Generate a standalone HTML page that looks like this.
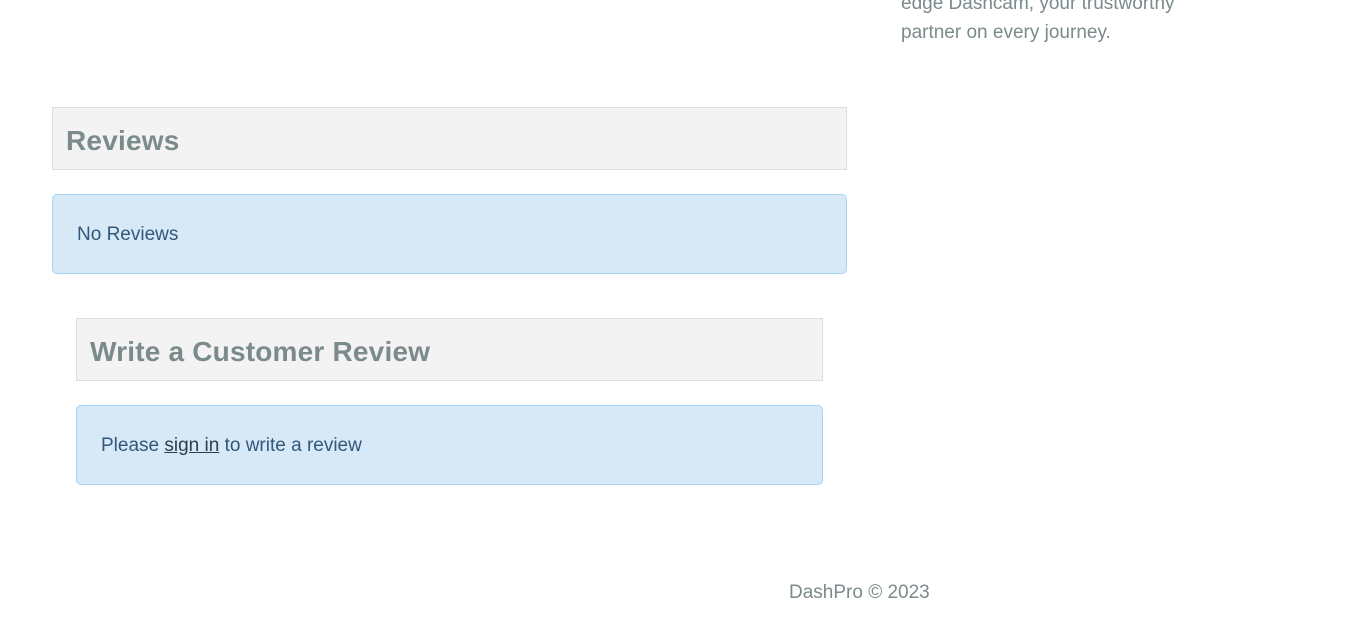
<!DOCTYPE html>
<html><head><style>
body{margin:0;background:#fff;font-family:"Liberation Sans",sans-serif;width:1362px;height:635px;overflow:hidden;position:relative}
.a{position:absolute}
.hd{background:#f3f3f3;border:1px solid #ddd;box-sizing:border-box;color:#7b8a8b;font-weight:bold;font-size:28px;padding-left:13px;line-height:65px;letter-spacing:0.2px}
.al{background:#d7e9f7;border:1px solid #a6d5f3;box-sizing:border-box;border-radius:5px;color:#31587a;font-size:19px;padding-left:24px;line-height:80px}
</style></head><body>
<div class="a" style="left:901px;top:-11px;color:#7b8a8b;font-size:19px;line-height:29px">edge Dashcam, your trustworthy<br>partner on every journey.</div>
<div class="a hd" style="left:52px;top:107px;width:795px;height:63px">Reviews</div>
<div class="a al" style="left:52px;top:194px;width:795px;height:80px">No Reviews</div>
<div class="a hd" style="left:76px;top:318px;width:747px;height:63px">Write a Customer Review</div>
<div class="a al" style="left:76px;top:405px;width:747px;height:80px">Please <u style="color:#2c3e50">sign in</u> to write a review</div>
<div class="a" style="left:789px;top:582px;color:#7b8a8b;font-size:19px">DashPro © 2023</div>
</body></html>
